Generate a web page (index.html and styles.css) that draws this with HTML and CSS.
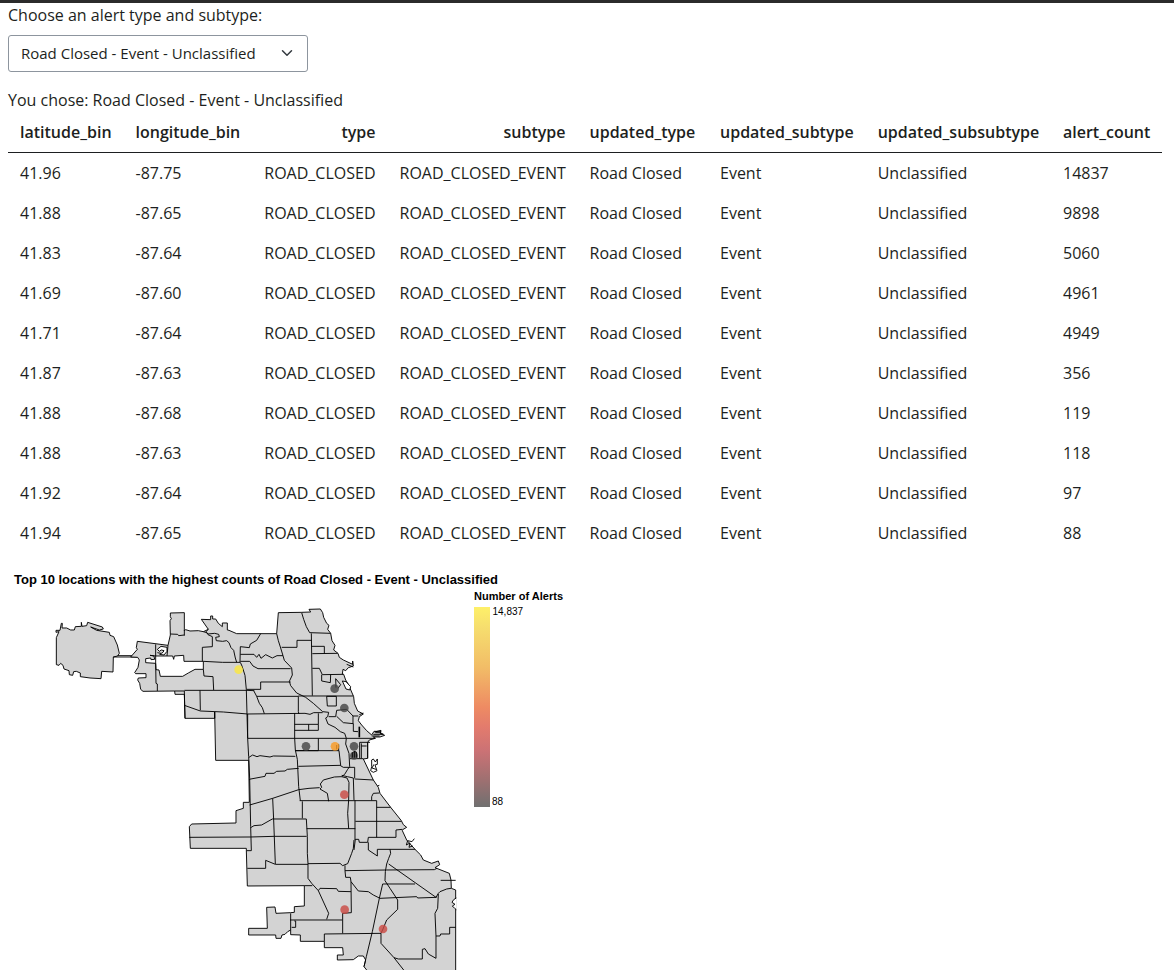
FILE: index.html
```html
<!DOCTYPE html>
<html lang="en">
<head>
<meta charset="utf-8">
<title>Alerts</title>
<link rel="stylesheet" href="styles.css">
</head>
<body>
<main class="page">
  <label class="label">Choose an alert type and subtype:</label>
  <div class="select"><span>Road Closed - Event - Unclassified</span>
    <svg class="chevron" viewBox="0 0 16 16"><path d="m2 5 6 6 6-6"/></svg>
  </div>
  <p class="chosen">You chose: Road Closed - Event - Unclassified</p>
  <table class="table">
    <colgroup><col class="c1"><col class="c2"><col class="c3"><col class="c4"><col class="c5"><col class="c6"><col class="c7"><col class="c8"></colgroup>
    <thead><tr><th>latitude_bin</th><th>longitude_bin</th><th class="r">type</th><th class="r">subtype</th><th>updated_type</th><th>updated_subtype</th><th>updated_subsubtype</th><th>alert_count</th></tr></thead>
    <tbody>
      <tr><td>41.96</td><td>-87.75</td><td class="r">ROAD_CLOSED</td><td class="r">ROAD_CLOSED_EVENT</td><td>Road Closed</td><td>Event</td><td>Unclassified</td><td>14837</td></tr>
      <tr><td>41.88</td><td>-87.65</td><td class="r">ROAD_CLOSED</td><td class="r">ROAD_CLOSED_EVENT</td><td>Road Closed</td><td>Event</td><td>Unclassified</td><td>9898</td></tr>
      <tr><td>41.83</td><td>-87.64</td><td class="r">ROAD_CLOSED</td><td class="r">ROAD_CLOSED_EVENT</td><td>Road Closed</td><td>Event</td><td>Unclassified</td><td>5060</td></tr>
      <tr><td>41.69</td><td>-87.60</td><td class="r">ROAD_CLOSED</td><td class="r">ROAD_CLOSED_EVENT</td><td>Road Closed</td><td>Event</td><td>Unclassified</td><td>4961</td></tr>
      <tr><td>41.71</td><td>-87.64</td><td class="r">ROAD_CLOSED</td><td class="r">ROAD_CLOSED_EVENT</td><td>Road Closed</td><td>Event</td><td>Unclassified</td><td>4949</td></tr>
      <tr><td>41.87</td><td>-87.63</td><td class="r">ROAD_CLOSED</td><td class="r">ROAD_CLOSED_EVENT</td><td>Road Closed</td><td>Event</td><td>Unclassified</td><td>356</td></tr>
      <tr><td>41.88</td><td>-87.68</td><td class="r">ROAD_CLOSED</td><td class="r">ROAD_CLOSED_EVENT</td><td>Road Closed</td><td>Event</td><td>Unclassified</td><td>119</td></tr>
      <tr><td>41.88</td><td>-87.63</td><td class="r">ROAD_CLOSED</td><td class="r">ROAD_CLOSED_EVENT</td><td>Road Closed</td><td>Event</td><td>Unclassified</td><td>118</td></tr>
      <tr><td>41.92</td><td>-87.64</td><td class="r">ROAD_CLOSED</td><td class="r">ROAD_CLOSED_EVENT</td><td>Road Closed</td><td>Event</td><td>Unclassified</td><td>97</td></tr>
      <tr><td>41.94</td><td>-87.65</td><td class="r">ROAD_CLOSED</td><td class="r">ROAD_CLOSED_EVENT</td><td>Road Closed</td><td>Event</td><td>Unclassified</td><td>88</td></tr>
    </tbody>
  </table>
  <svg class="chart" viewBox="8 553 600 417">
    <defs><linearGradient id="ramp" x1="0" y1="0" x2="0" y2="1">
      <stop offset="0" stop-color="#fef069"/><stop offset=".1" stop-color="#f6de6e"/><stop offset=".3" stop-color="#f2bd67"/><stop offset=".5" stop-color="#ee8b63"/><stop offset=".6" stop-color="#e37b6d"/><stop offset=".72" stop-color="#cb7275"/><stop offset=".86" stop-color="#a07071"/><stop offset="1" stop-color="#707070"/>
    </linearGradient></defs>
    <text class="title" x="14" y="584" textLength="484">Top 10 locations with the highest counts of Road Closed - Event - Unclassified</text>
    <g class="map" transform="translate(180 600) scale(.33333)">
      <!-- O'Hare and its corridor -->
      <path class="land" d="M-371 113L-363 95-372 97-372 91-360 91-356 70-353 70-354 84-340 84-328 90-317 90-314 80-296 79-296 67-294 79-280 77-277 67-233 81-230 87-242 90-268 81-250 91-212 97-210 106-199 110-188 135-182 160-187 168-200 171-201 216-235 214-237 236-270 234-299 230-299 219-311 214-319 215-322 226-332 224-333 212-348 207-351 196-358 190-363 196-371 194Z"/>
      <path d="M-187 167H-144M-200 171H-127"/>
      <!-- city outline -->
      <path class="land" d="M-148 171L-128 148-131 143-128 124-36 136-29 105-30 62-26 56-29 50-29 39 13 38 13 92 17 89 30 93 55 92 70 95 85 88 64 58 92 59 92 48 98 48 98 57 107 57 115 70 127 80 127 69 142 69 142 90 147 91 170 101 290 101 295 38 365 37 392 36 387 28 421 27 428 38 431 52 440 70 447 76 443 88 452 100 456 122 465 136 461 150 474 160 478 172 490 180 518 193 518 183 520 198 505 203 497 212 489 208 487 222 491 223 497 240 505 253 521 290 523 310 533 333 550 342 538 350 535 362 545 375 560 392 575 405 582 394 602 394 602 400 614 406 600 411 580 411 586 415 568 420 563 427 563 475 550 477 580 540 595 562 600 580 632 622 664 662 670 674 680 682 668 689 667 692 680 720 705 748 722 765 730 780 755 790 775 783 779 794 765 803 808 820 813 840 814 865 827 870 827 1115 555 1115 560 1110 552 1100 557 1080 550 1068 535 1068 520 1079 472 1080 472 1065 490 1065 488 1043 433 1043 433 1024 361 1024 361 1005 332 1004 332 990 323 995 315 1003 306 1005 303 1015 288 1015 287 1005 206 1005 206 985 262 985 260 922 285 921 288 940 332 938 343 937 343 920 373 918 373 857 202 858 199 752 199 745 31 745 28 680 35 672 168 669 168 632 190 625 190 607 208 607 206 481 107 481 104 336 104 355 15 355 13 283-15 283-16 273-111 274-118 268-121 250-127 240-125 234-102 233-102 221-133 221-136 218-126 202-122 180-127 172Z"/>
      <path class="gap" d="M-73 190L-103 188-103 176-88 174-87 179-76 178-78 168-90 166-72 168-22 168-19 178-17 168 11 166 12 184 70 184 70 208 45 208 25 219 8 229-59 229-63 210-72 209Z"/>
      <path class="gap" d="M-68 148L-57 139-39 142-39 154-48 165-61 163-51 157-48 152-56 150-62 154Z"/>
      <!-- north side -->
      <path d="M-73 133V190L-72 250-68 252-68 273M-68 158L-57 160M-36 136L-39 168M-29 102L-7 103-4 107 13 105M13 90V107M70 95L80 98 84 104 97 110 97 140 67 142 67 184M85 88L78 95 84 102 104 100 116 103 118 110 107 112 109 122 128 124 140 122 147 128 153 143 161 151 166 174 170 187M70 184L127 187 180 187 181 140 208 143 211 132 230 121 242 101M181 163L222 163 230 172 237 163 243 175 257 164 277 174 291 167 309 167M181 184L209 184 219 198 234 206 332 206M290 101L295 122 302 144 309 167 313 181 335 204 337 225 328 244 332 257 350 279 377 292 400 310 428 335M305 142H351V121H394M365 38L371 58 379 80 389 98 452 100M394 100L397 287M394 139H433V160M397 161L473 160M397 205H418L427 224 490 223M425 224V243L451 248 452 224M467 236L468 263M467 236L482 254 474 265M440 289H469V318H442ZM355 288H520M332 246H242V268H200M181 187L186 198 195 226 199 269 203 415M70 208L72 228 99 230 101 270M13 271H200L223 272M-16 273H13L15 355M60 271L61 331M13 316L61 333 130 336 203 342M221 272L230 289H355V335L357 342M230 289L238 310 247 323 253 341M203 342L375 340 390 343 401 338 428 338M428 335L446 337 443 350 437 354 444 372 465 382 481 395 494 400 499 415M446 350H467L470 331 500 328 519 348M470 349L490 368 520 371V394L534 395M519 348H535M519 348V371"/>
      <path class="gap" d="M487 243L498 245 512 260 509 270 498 267Z"/>
      <path class="rail" d="M538 380V412"/>
      <!-- west side and downtown -->
      <path d="M104 336L104 355M203 342L203 415 206 470 209 535 212 680M344 340V415L346 450 352 478 356 560 361 602M344 373H415V391H344M386 373V391M415 340V373M203 415L500 415 586 415M415 415V452H346M207 472L218 465 231 470 240 467 270 471 280 468 346 469M207 538L255 529 258 520 282 520 290 514 315 513 322 508 356 505M355 499L480 496 490 502 524 502V535M346 452H477L482 496M470 435V448M476 433V452M499 415L497 432 507 460 509 500 503 508 494 523 485 530 501 534 507 547 506 600M485 530L463 531 430 540 421 552 425 562 420 567 442 580 446 604M209 615L278 595 356 569 387 565 419 563M485 526L502 530 520 534 522 600M524 537L580 540M510 476H550M539 427V475M544 430V475M563 427V475M539 427H570M544 438H560M580 403H608M586 398H602M575 408H599"/>
      <path d="M575 480L580 477 586 486 592 477 592 493 585 495 591 512 580 517 572 512 575 500ZM582 493L576 504 588 508M592 558L598 556"/>
      <!-- south-west and mid-south -->
      <path d="M359 602H590M367 604V655M525 601V720M506 600L503 640 506 686M575 601L575 590 580 580 598 579M590 602V712M590 622H632M526 664H664M278 595L281 660 286 792M212 680L214 752 199 752M212 683L222 677 245 675 277 657 379 657 382 709M28 712L212 711 283 709 380 709M380 686H526M202 805L257 805V781L286 793H384M522 750L526 718 536 718 538 727 563 727 565 712 648 712V690L667 688M565 727L565 750 592 768V748L705 748"/>
      <!-- far south -->
      <g transform="translate(330 660)">
        <path d="M52 49L52 100 54 130 54 175 65 190 85 212 116 280 110 298M54 131L150 130 158 137 165 134 173 131 185 100 190 85 192 60M165 136V152L167 172 181 172 183 185 184 278 158 280V340M165 152L290 150 433 149 441 145M183 185L205 213 235 215 250 225 270 235 380 230 383 234 440 232M300 88L302 100 296 115 290 132 286 155 285 182 300 205 323 240 323 268 290 300 279 327 273 340 273 370 312 413 345 455M296 132L438 232M278 192H375M278 192L268 235 247 335 229 410 222 440M43 197H67M85 212L90 205 140 206 145 214 183 215M0 300H157M2 280V330M103 364V342L273 340M312 413L325 417 397 417 397 388 405 386 415 402 438 415 438 348 435 280 443 265 445 222M438 232L445 220 450 215 470 207 483 205M438 348L450 348 452 342H479V322H497M452 181H497M13 303H17V322H5"/>
      </g>
      <path class="gap" d="M829 894L821 899 816 907 825 913 817 918 824 925 829 929"/>
      <path d="M703 716L696 725 683 722 679 735 690 729 687 742 698 738M500 193L520 201M538 344L550 339M584 396L603 391 601 401 610 402"/>
      <g class="dots"><circle class="dark" cx="378" cy="439" r="13"/><circle class="dark" cx="522" cy="439" r="13"/><circle class="dark" cx="522" cy="467" r="12"/><circle class="dark" cx="464" cy="266" r="13"/><circle class="dark" cx="493" cy="324" r="13"/><circle class="orange" cx="465" cy="439" r="13"/><circle class="yellow" cx="176" cy="209" r="13"/><circle class="red" cx="493" cy="584" r="13"/><circle class="red" cx="494" cy="929" r="13"/><circle class="red" cx="609" cy="987" r="13"/></g>
      <path d="M517 473V459L522 454 529 456V473M523 456V473"/>
    </g>
    <text class="legend-title" x="474" y="600" textLength="89">Number of Alerts</text>
    <rect x="474" y="607" width="16" height="200" fill="url(#ramp)"/>
    <text class="tick" x="492.5" y="615">14,837</text>
    <text class="tick" x="492" y="805">88</text>
  </svg>
</main>
</body>
</html>
```
FILE: styles.css
```css
* { box-sizing: border-box; }
body { margin: 0; height: 970px; overflow: hidden; background: #fff; color: #1d1f21; font: 16px/24px "Open Sans", sans-serif; }
.page { height: 970px; padding: 0 8px; border-top: 3px solid #2b2b2b; overflow: hidden; }
.label { display: block; }
.select { display: flex; align-items: center; justify-content: space-between; width: 300px; height: 37px; margin-top: 8px; padding: 0 12px 2px; border: 1px solid #8d959e; border-radius: 3px; font-size: 15px; }
.chevron { width: 12px; height: 12px; margin-right: 2px; fill: none; stroke: #343a40; stroke-width: 2; stroke-linecap: round; stroke-linejoin: round; }
.chosen { margin: 16px 0 0; }
.table { width: 1154px; table-layout: fixed; border-collapse: separate; border-spacing: 0; }
.table th, .table td { height: 40px; padding: 8px 12px; text-align: left; white-space: nowrap; }
.table th { height: 41px; font-weight: 600; border-bottom: 1px solid #1d1f21; }
.table .r { text-align: right; }
.c1 { width: 115.5px; }
.c2 { width: 128.5px; }
.c3 { width: 135.5px; }
.c4 { width: 190px; }
.c5 { width: 130.5px; }
.c6 { width: 157.7px; }
.c7 { width: 185.3px; }
.c8 { width: 111px; }
.chart { display: block; width: 600px; height: 417px; font-family: "Liberation Sans", Arial, sans-serif; fill: #000; }
.title { font-size: 13px; font-weight: 700; }
.legend-title { font-size: 11px; font-weight: 700; }
.tick { font-size: 10px; }
.map path { fill: none; stroke: #000; stroke-width: 2.8; stroke-linejoin: round; }
.map .land { fill: #d3d3d3; }
.map .gap { fill: #fff; }
.map .rail { stroke-width: 5; }
.dots { opacity: .8; }
.dark { fill: #444; }
.orange { fill: #fa9a22; }
.yellow { fill: #fce83c; }
.red { fill: #cb4943; }
```
